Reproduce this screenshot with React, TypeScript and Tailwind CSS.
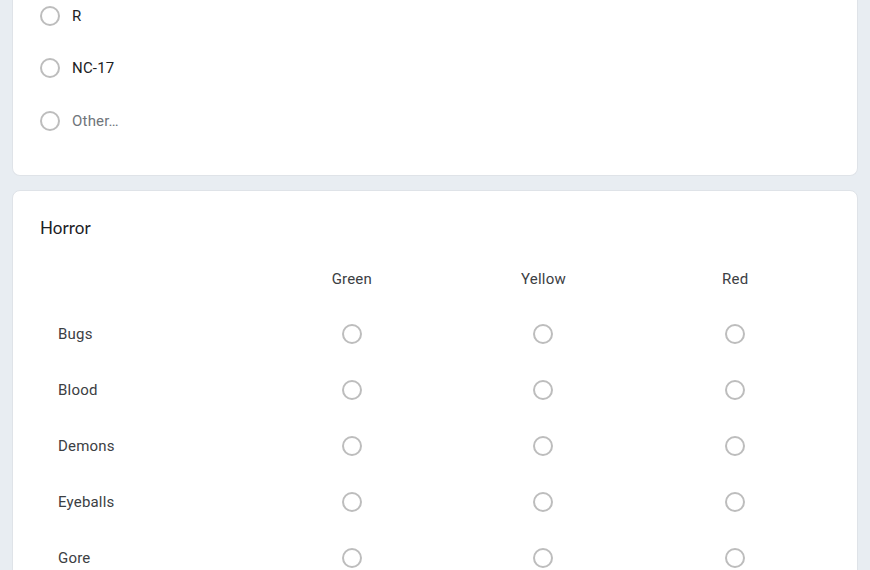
const ratings = ["R", "NC-17"];
const columns = ["Green", "Yellow", "Red"];
const rows = ["Bugs", "Blood", "Demons", "Eyeballs", "Gore"];

const Radio: React.FC = () => (
  <span className="block w-5 h-5 rounded-full border-2 border-[#bdbdbd] bg-white shrink-0" />
);

const App: React.FC = () => {
  return (
    <div
      className="min-h-[570px] h-[570px] overflow-hidden bg-[#e8edf2] px-3"
      style={{ fontFamily: "Roboto, 'Liberation Sans', sans-serif" }}
    >
      {/* rating question, scrolled so only its bottom shows */}
      <div className="bg-white rounded-b-lg border border-t-0 border-[#dfe3e8] pl-[27px] pb-[27px]">
        <div className="-mt-[10px]">
          {ratings.map((r) => (
            <div key={r} className="h-[52px] flex items-center gap-[12px]">
              <Radio />
              <span className="text-[15px] tracking-[0.2px] text-[#202124]">{r}</span>
            </div>
          ))}
          <div className="h-[54px] flex items-center gap-[12px]">
            <Radio />
            <span className="text-[15px] tracking-[0.2px] text-[#70757a]">Other…</span>
          </div>
        </div>
      </div>

      {/* grid question */}
      <div className="mt-[14px] bg-white rounded-lg border border-[#dfe3e8] pl-[27px] pr-[26px] pt-[25px]">
        <h2
          className="text-[17px] leading-6 text-[#202124] tracking-[0.1px] mb-[15px]"
          style={{ fontFamily: "Lato, 'Open Sans', sans-serif" }}
        >
          Horror
        </h2>
        <div className="grid grid-cols-[216px_1fr_1fr_1fr]">
          <div className="h-12" />
          {columns.map((c) => (
            <div
              key={c}
              className="h-12 flex items-center justify-center text-[15px] tracking-[0.2px] text-[#3c4043]"
            >
              {c}
            </div>
          ))}
        </div>
        <div className="mt-[3px]">
          {rows.map((r) => (
            <div key={r} className="grid grid-cols-[216px_1fr_1fr_1fr] h-14">
              <div className="flex items-center pl-[18px] text-[15px] tracking-[0.2px] text-[#3c4043]">
                {r}
              </div>
              {columns.map((c) => (
                <div key={c} className="flex items-center justify-center">
                  <Radio />
                </div>
              ))}
            </div>
          ))}
        </div>
      </div>
    </div>
  );
};

export default App;
